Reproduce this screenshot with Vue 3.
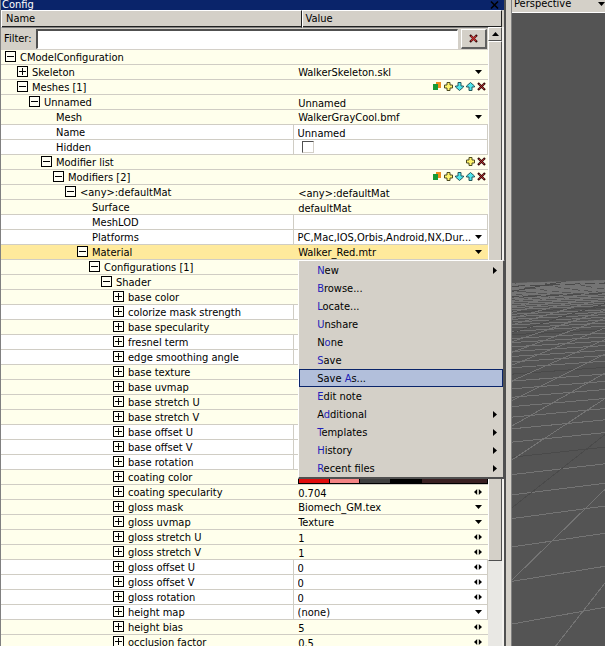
<script setup>
import { ref } from 'vue'

const rows = ref([
  { name: 'CModelConfiguration', depth: 0, toggle: 'minus' },
  { name: 'Skeleton', depth: 1, toggle: 'plus', kind: 'select', value: 'WalkerSkeleton.skl' },
  { name: 'Meshes [1]', depth: 1, toggle: 'minus', tools: ['copy', 'add', 'down', 'up', 'remove'] },
  { name: 'Unnamed', depth: 2, toggle: 'minus', kind: 'text', value: 'Unnamed' },
  { name: 'Mesh', depth: 3, kind: 'select', value: 'WalkerGrayCool.bmf' },
  { name: 'Name', depth: 3, kind: 'text', value: 'Unnamed', plain: true },
  { name: 'Hidden', depth: 3, kind: 'check', value: false, plain: true },
  { name: 'Modifier list', depth: 3, toggle: 'minus', tools: ['add', 'remove'] },
  { name: 'Modifiers [2]', depth: 4, toggle: 'minus', tools: ['copy', 'add', 'down', 'up', 'remove'] },
  { name: '<any>:defaultMat', depth: 5, toggle: 'minus', kind: 'text', value: '<any>:defaultMat' },
  { name: 'Surface', depth: 6, kind: 'text', value: 'defaultMat' },
  { name: 'MeshLOD', depth: 6, kind: 'text', value: '', plain: true },
  { name: 'Platforms', depth: 6, kind: 'select', value: 'PC,Mac,IOS,Orbis,Android,NX,Dur...', plain: true },
  { name: 'Material', depth: 6, toggle: 'minus', kind: 'select', value: 'Walker_Red.mtr', selected: true },
  { name: 'Configurations [1]', depth: 7, toggle: 'minus' },
  { name: 'Shader', depth: 8, toggle: 'minus' },
  { name: 'base color', depth: 9, toggle: 'plus' },
  { name: 'colorize mask strength', depth: 9, toggle: 'plus', plain: true },
  { name: 'base specularity', depth: 9, toggle: 'plus' },
  { name: 'fresnel term', depth: 9, toggle: 'plus', plain: true },
  { name: 'edge smoothing angle', depth: 9, toggle: 'plus', plain: true },
  { name: 'base texture', depth: 9, toggle: 'plus' },
  { name: 'base uvmap', depth: 9, toggle: 'plus' },
  { name: 'base stretch U', depth: 9, toggle: 'plus' },
  { name: 'base stretch V', depth: 9, toggle: 'plus' },
  { name: 'base offset U', depth: 9, toggle: 'plus', plain: true },
  { name: 'base offset V', depth: 9, toggle: 'plus', plain: true },
  { name: 'base rotation', depth: 9, toggle: 'plus', plain: true },
  { name: 'coating color', depth: 9, toggle: 'plus', kind: 'swatches' },
  { name: 'coating specularity', depth: 9, toggle: 'plus', kind: 'spin', value: '0.704' },
  { name: 'gloss mask', depth: 9, toggle: 'plus', kind: 'select', value: 'Biomech_GM.tex' },
  { name: 'gloss uvmap', depth: 9, toggle: 'plus', kind: 'select', value: 'Texture' },
  { name: 'gloss stretch U', depth: 9, toggle: 'plus', kind: 'spin', value: '1' },
  { name: 'gloss stretch V', depth: 9, toggle: 'plus', kind: 'spin', value: '1' },
  { name: 'gloss offset U', depth: 9, toggle: 'plus', kind: 'spin', value: '0', plain: true },
  { name: 'gloss offset V', depth: 9, toggle: 'plus', kind: 'spin', value: '0', plain: true },
  { name: 'gloss rotation', depth: 9, toggle: 'plus', kind: 'spin', value: '0', plain: true },
  { name: 'height map', depth: 9, toggle: 'plus', kind: 'select', value: '(none)', plain: true },
  { name: 'height bias', depth: 9, toggle: 'plus', kind: 'spin', value: '5' },
  { name: 'occlusion factor', depth: 9, toggle: 'plus', kind: 'spin', value: '0.5' }
])

// pre + key + post make up the label; key is the accelerator letter
const menu = [
  { pre: '', key: 'N', post: 'ew', sub: true },
  { pre: '', key: 'B', post: 'rowse...' },
  { pre: '', key: 'L', post: 'ocate...' },
  { pre: '', key: 'U', post: 'nshare' },
  { pre: 'N', key: 'o', post: 'ne' },
  { pre: '', key: 'S', post: 'ave' },
  { pre: 'Save ', key: 'A', post: 's...', active: true },
  { pre: '', key: 'E', post: 'dit note' },
  { pre: 'A', key: 'd', post: 'ditional', sub: true },
  { pre: '', key: 'T', post: 'emplates', sub: true },
  { pre: '', key: 'H', post: 'istory', sub: true },
  { pre: '', key: 'R', post: 'ecent files', sub: true }
]

const filter = ref('')

// Ground grid in perspective: line heights shrink towards the horizon
const horizon = 225
const gridLines = []
for (let k = 0; k < 50; k++) {
  const y = horizon + 1 / (0.002506 + 0.0003 * k)
  gridLines.push({ y1: y, y2: y - 7 - (y - 379) * 0.04, dark: k % 8 === 6 })
}
for (let j = -1; j < 20; j++) {
  gridLines.push({
    y1: horizon + 1 / (0.002817 + 0.00072 * j),
    y2: horizon + 1 / (0.003783 + 0.00099 * j),
    dark: j % 8 === 1
  })
}
</script>

<template>
  <div class="workspace">
    <section class="config">
      <header class="titlebar">
        <h1>Config</h1>
        <button class="close" aria-label="Close">
          <svg width="9" height="8" viewBox="0 0 9 8"><path d="M1 0.5l7 7M8 0.5l-7 7" stroke="#000" stroke-width="1.5" /></svg>
        </button>
      </header>
      <div class="columns">
        <div class="column">Name</div>
        <div class="column">Value</div>
      </div>
      <div class="body">
        <div class="content">
          <div class="filter">
            <label for="filter">Filter:</label>
            <input id="filter" v-model="filter" type="text" />
            <button aria-label="Clear filter">
              <svg width="9" height="9" viewBox="0 0 9 9"><path d="M1 1l7 7M8 1l-7 7" stroke="#3a0c0c" stroke-width="2.2" /><path d="M2 2l5 5M7 2l-5 5" stroke="#c03030" stroke-width="1.2" /></svg>
            </button>
          </div>
          <div class="tree" role="treegrid" aria-label="Configuration">
            <div v-for="(row, i) in rows" :key="i" class="row" :class="{ plain: row.plain, selected: row.selected }" role="row">
              <div class="name" role="gridcell" :style="{ paddingLeft: 4 + row.depth * 12 + 'px' }">
                <button v-if="row.toggle" class="toggle" :aria-label="'Toggle ' + row.name">
                  <svg width="11" height="11" viewBox="0 0 11 11" shape-rendering="crispEdges">
                    <rect x="0.5" y="0.5" width="10" height="10" fill="#fffff4" stroke="#000" />
                    <path :d="row.toggle === 'plus' ? 'M2 5.5h7M5.5 2v7' : 'M2 5.5h7'" stroke="#000" />
                  </svg>
                </button>
                <span v-else class="toggle"></span>
                <label :for="'value-' + i">{{ row.name }}</label>
              </div>
              <div class="value" role="gridcell">
                <template v-if="row.kind === 'select'">
                  <select :id="'value-' + i" v-model="row.value"><option>{{ row.value }}</option></select>
                  <svg class="caret" width="7" height="4" viewBox="0 0 7 4"><path d="M0 0h7L3.5 4z" /></svg>
                </template>
                <input v-else-if="row.kind === 'text'" :id="'value-' + i" v-model="row.value" type="text" />
                <input v-else-if="row.kind === 'check'" :id="'value-' + i" v-model="row.value" type="checkbox" />
                <template v-else-if="row.kind === 'spin'">
                  <input :id="'value-' + i" v-model="row.value" type="text" />
                  <svg class="caret" width="8" height="6" viewBox="0 0 8 6"><path d="M3.200 0v6L0 3zM4.800 0v6L8 3z" /></svg>
                </template>
                <div v-else-if="row.kind === 'swatches'" class="swatches">
                  <i class="red"></i><i class="pink"></i><i class="gray"></i><i class="black"></i><i class="brown"></i>
                </div>
                <div v-if="row.tools" class="tools">
                  <button v-for="tool in row.tools" :key="tool" :aria-label="tool">
                    <svg width="9" height="9" viewBox="0 0 9 9">
                      <template v-if="tool === 'copy'">
                        <rect x="3" y="0" width="5" height="6" fill="#f08a1c" />
                        <rect x="0" y="2" width="5" height="6" fill="#159a35" />
                      </template>
                      <path v-else-if="tool === 'add'" d="M3 0.5h3v2.500h2.500v3h-2.500v2.500h-3v-2.500h-2.500v-3h2.500z" fill="#fff36a" stroke="#4c4a20" />
                      <path v-else-if="tool === 'down'" d="M3 0.5h3v3.500h2.500v1l-4 3.500l-4 -3.500v-1h2.500z" fill="#4fe6ee" stroke="#24565c" />
                      <path v-else-if="tool === 'up'" d="M3 8.500h3v-3.500h2.500v-1l-4 -3.500l-4 3.500v1h2.500z" fill="#4fe6ee" stroke="#24565c" />
                      <template v-else>
                        <path d="M1 1l7 7M8 1l-7 7" stroke="#3a0c0c" stroke-width="2.2" />
                        <path d="M2 2l5 5M7 2l-5 5" stroke="#b02c2c" stroke-width="1" />
                      </template>
                    </svg>
                  </button>
                </div>
                <div v-if="row.selected" class="menu" role="menu">
                  <button v-for="item in menu" :key="item.key" role="menuitem" :class="{ active: item.active }">
                    <span>{{ item.pre }}<b>{{ item.key }}</b>{{ item.post }}</span>
                    <svg v-if="item.sub" width="4" height="7" viewBox="0 0 4 7"><path d="M0 0v7L4 3.5z" /></svg>
                  </button>
                </div>
              </div>
            </div>
          </div>
        </div>
        <div class="scrollbar">
          <button class="scroll-up" aria-label="Scroll up">
            <svg width="7" height="4" viewBox="0 0 7 4"><path d="M0 4h7L3.5 0z" /></svg>
          </button>
          <div class="thumb"></div>
        </div>
      </div>
    </section>
    <div class="splitter"></div>
    <section class="viewport">
      <div class="camera">
        <select aria-label="Camera"><option>Perspective</option></select>
        <svg width="7" height="4" viewBox="0 0 7 4"><path d="M0 0h7L3.5 4z" /></svg>
      </div>
      <svg class="scene" viewBox="0 13 93 633" preserveAspectRatio="none">
        <clipPath id="ground"><path d="M0 283L93 280V646H0z" /></clipPath>
        <g clip-path="url(#ground)" shape-rendering="crispEdges">
          <line v-for="(line, i) in gridLines" :key="i" x1="0" x2="93" :y1="line.y1" :y2="line.y2" :class="{ dark: line.dark }" />
        </g>
      </svg>
    </section>
  </div>
</template>

<style>
body {
  margin: 0;
  background: #d4d0c8;
}
</style>

<style scoped>
.workspace {
  display: grid;
  grid-template-columns: minmax(0, 504fr) 7px minmax(0, 94fr);
  height: 100vh;
  overflow: hidden;
  background: #d4d0c8;
  color: #000;
  font-family: "DejaVu Sans Condensed", "DejaVu Sans", sans-serif;
  font-stretch: condensed;
  font-size: 11px;
  line-height: 14px;
}
.workspace * {
  box-sizing: border-box;
}
button,
input,
select {
  margin: 0;
  padding: 0;
  border: 0;
  border-radius: 0;
  background: none;
  color: inherit;
  font: inherit;
  appearance: none;
  outline: none;
}
svg {
  display: block;
}
.config {
  display: flex;
  flex-direction: column;
  min-width: 0;
  min-height: 0;
  border-left: 1px solid #808080;
}
.titlebar {
  display: flex;
  flex: none;
  align-items: flex-end;
  justify-content: space-between;
  height: 10px;
  padding: 0 5px 0 1px;
  background: #0a246a;
}
.titlebar h1 {
  margin: 0;
  color: #fff;
  font-size: 11px;
  font-weight: 400;
  line-height: 11px;
}
.close {
  height: 10px;
}
.columns {
  display: grid;
  flex: none;
  grid-template-columns: 3fr 2fr;
  height: 17px;
  margin-right: 2px;
  border-bottom: 1px solid #202020;
}
.column {
  padding-left: 4px;
  border: 1px solid #fff;
  border-right: 1px solid #202020;
  border-bottom: 1px solid #808080;
  line-height: 16px;
}
.column + .column {
  padding-left: 3px;
}
.body {
  display: flex;
  flex: 1;
  min-height: 0;
}
.content {
  flex: 1;
  min-width: 0;
}
.filter {
  display: flex;
  align-items: center;
  gap: 3px;
  height: 23px;
  padding: 0 1px 0 3px;
}
.filter input {
  flex: 1;
  min-width: 0;
  height: 20px;
  margin-left: 1px;
  padding: 0 3px;
  border: 1px solid #fff;
  border-top: 2px solid #505050;
  border-left: 2px solid #505050;
  background: #fff;
}
.filter button {
  display: grid;
  width: 26px;
  height: 20px;
  place-items: center;
  border: 1px solid #fff;
  border-right: 2px solid #606060;
  border-bottom: 2px solid #606060;
}
.row {
  display: grid;
  grid-template-columns: minmax(0, 3fr) minmax(0, 2fr);
  grid-template-rows: 14px;
  height: 15px;
  border-bottom: 1px solid #d0cdc4;
  background: #ffffec;
}
.row.plain {
  border-right: 1px solid #d0cdc4;
  background: #fff;
}
.row.selected {
  background: #ffea9c;
}
.name {
  display: flex;
  align-items: flex-start;
  gap: 4px;
  white-space: nowrap;
}
.name label {
  line-height: 16px;
}
.toggle {
  flex: none;
  width: 11px;
  height: 11px;
  margin-top: 1px;
}
.value {
  position: relative;
  display: flex;
  align-items: center;
  padding: 0 6px 0 4px;
  border-left: 1px solid transparent;
}
.plain .value {
  padding-right: 5px;
  border-left-color: #d0cdc4;
}
.value input[type="text"],
.value select {
  flex: 1;
  min-width: 0;
  height: 14px;
  padding-top: 2px;
  line-height: 12px;
  text-overflow: clip;
}
.value input[type="checkbox"] {
  width: 12px;
  height: 12px;
  margin-left: 4px;
  border: 1px solid #d4d0c8;
  border-top: 1px solid #505050;
  border-left: 1px solid #505050;
  background: #fff;
}
.caret,
.tools {
  flex: none;
  margin-bottom: 1px;
}
.tools {
  display: flex;
  gap: 2px;
  margin-left: auto;
  margin-right: -4px;
}
.swatches {
  display: flex;
  flex: 1;
  height: 13px;
  margin-right: -6px;
  border: 1px solid #000;
  background: #000;
  gap: 1px;
}
.swatches i {
  flex: 10;
}
.swatches .red {
  background: #e00c0c;
}
.swatches .pink {
  background: #f48484;
}
.swatches .gray {
  background: #404040;
}
.swatches .black {
  background: #000;
}
.swatches .brown {
  flex: 22;
  background: #3a2022;
}
.menu {
  position: absolute;
  z-index: 2;
  top: 15px;
  left: 4px;
  width: 207px;
  border: 1px solid #fff;
  border-right: 2px solid #505050;
  border-bottom: 2px solid #505050;
  background: #d4d0c8;
}
.menu button {
  display: flex;
  align-items: center;
  justify-content: space-between;
  width: 100%;
  height: 18px;
  padding: 0 5px 0 17px;
  border: 1px solid transparent;
}
.menu span {
  padding-top: 2px;
}
.menu .active {
  border-color: #0a246a;
  background: #b2bfdb;
}
.menu b {
  color: #2020b8;
  font-weight: 400;
}
.scrollbar {
  display: flex;
  flex: none;
  flex-direction: column;
  width: 16px;
  border-right: 2px solid #f4f2ee;
  background: #e9e8e4;
}
.scroll-up {
  display: grid;
  flex: none;
  height: 14px;
  place-items: center;
}
.scroll-up,
.thumb {
  border: 1px solid #fff;
  border-right: 1px solid #505050;
  border-bottom: 1px solid #505050;
  background: #d4d0c8;
}
.thumb {
  height: 84%;
}
.splitter {
  border-left: 2px solid #505050;
}
.viewport {
  display: flex;
  flex-direction: column;
  min-width: 0;
  min-height: 0;
  border-left: 1px solid #808080;
  background: #545454;
}
.camera {
  display: flex;
  flex: none;
  align-items: center;
  height: 13px;
  padding: 0 0 4px 2px;
  border-bottom: 1px solid #fff;
  background: #d4d0c8;
}
.camera select {
  flex: 1;
  min-width: 0;
  height: 14px;
}
.scene {
  flex: 1;
  width: 100%;
  min-height: 0;
}
.scene line {
  stroke: #747474;
}
.scene .dark {
  stroke: #4a4a4a;
}
</style>
